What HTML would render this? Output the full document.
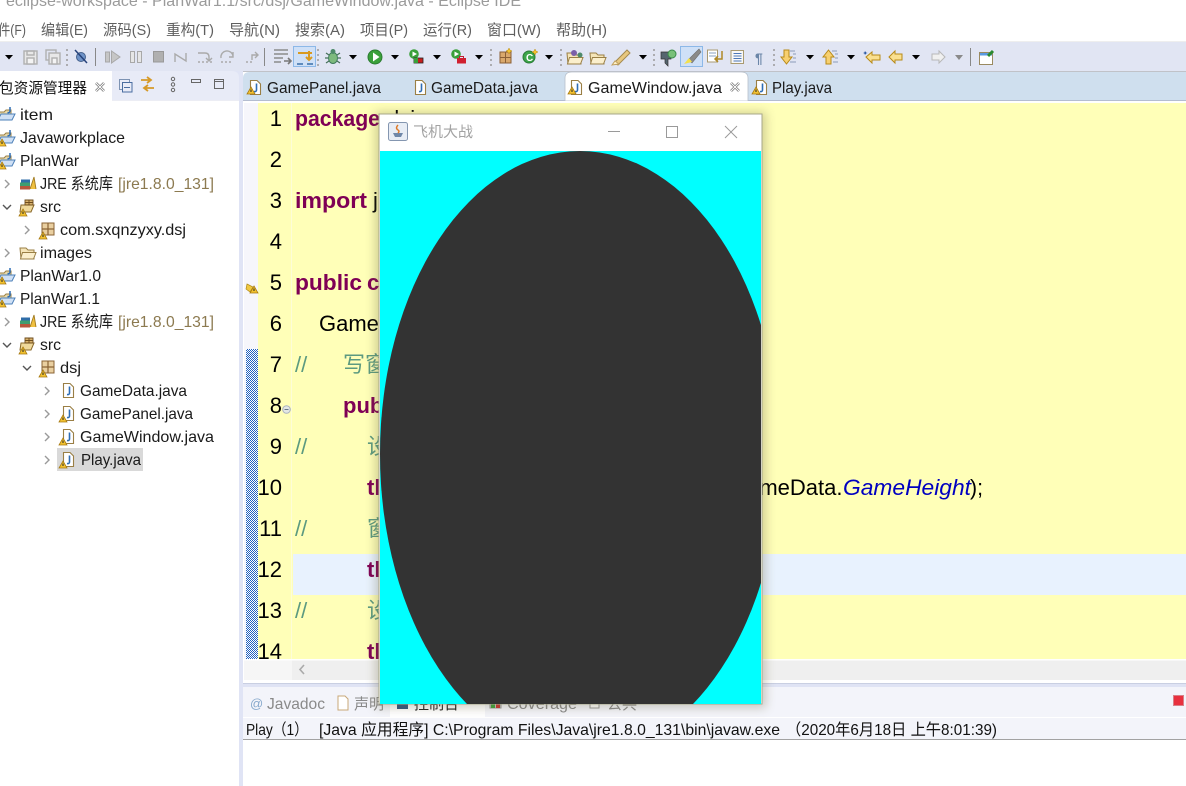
<!DOCTYPE html>
<html lang="zh"><head><meta charset="utf-8"><title>Eclipse</title>
<style>
html,body{margin:0;padding:0;background:#fff;width:1186px;height:786px;overflow:hidden}
svg{display:block;position:absolute;left:0;top:0}
text{font-family:"Liberation Sans","Noto Sans CJK SC",sans-serif;white-space:pre}
.m{font-size:15px;fill:#5f5f5f}
.t{font-size:16px;fill:#1a1a1a}
.b{font-size:16px;fill:#8c7a50}
.n{font-size:22px;fill:#000;text-anchor:end}
.k{font-size:22px;font-weight:bold;fill:#7f0055}
.c{font-size:22px;fill:#000}
.g{font-size:22px;fill:#5c9a80}
</style></head><body>
<svg width="1186" height="786" viewBox="0 0 1186 786" xmlns="http://www.w3.org/2000/svg">
<defs>
<pattern id="h" width="2" height="2" patternUnits="userSpaceOnUse"><rect width="2" height="2" fill="#fff"/><rect width="1" height="1" fill="#1f5fc0"/><rect x="1" y="1" width="1" height="1" fill="#1f5fc0"/></pattern>
<filter id="sh" x="-10%" y="-10%" width="120%" height="120%"><feGaussianBlur stdDeviation="5"/></filter>
<clipPath id="cl"><rect x="380" y="151" width="381" height="553"/></clipPath>
<g id="ar"><path d="M-4 -2H4L0 2.5Z" fill="#000"/></g>
<g id="dots"><path d="M0 -8v2M0 -3v2M0 2v2M0 7v2" stroke="#9a9a9a" stroke-width="1.5"/></g>
<g id="warn"><path d="M4 0L8 7H0Z" fill="#f2c230" stroke="#a87a10" stroke-width=".8"/><path d="M4 2.5v2.5" stroke="#222" stroke-width="1"/></g>
<g id="j"><path d="M1.5 .5H8L11.5 4V14.5H1.5Z" fill="#fff" stroke="#9a7f45" stroke-width="1.1"/><path d="M7.5 3.5V10Q7.5 12 5 11.5" fill="none" stroke="#2d6db5" stroke-width="1.6"/></g>
<g id="prj"><path d="M0 5H6L8 3H13V13H2Z" fill="#e9d9a8" stroke="#9a7f45"/><path d="M3 7H17L14 13H0Z" fill="#cfe0f5" stroke="#4d80b8"/><path d="M12 0V4Q12 6 9.500 5.500" fill="none" stroke="#2d6db5" stroke-width="1.500"/></g>
<g id="pkg"><rect x="0" y="0" width="12" height="12" fill="#e9cfa0" stroke="#8a6335"/><path d="M6 0V12M0 6H12" stroke="#8a6335" stroke-width="1.200"/></g>
<g id="src"><path d="M1 6H14L11 13H0Z" fill="#f0d99b" stroke="#8a6a2c"/><path d="M5 1H13V6H5ZM9 1V6M5 3.500H13" fill="#d9b26c" stroke="#6e4d1e" stroke-width=".9"/></g>
<g id="jre"><rect x="0" y="9" width="10" height="3.500" fill="#b7563c"/><rect x="0" y="5.500" width="10" height="3.500" fill="#3f9d70"/><rect x="1" y="2.500" width="9" height="3" fill="#2f6da8"/><path d="M10 12L14 0L16 12" fill="#f0c040" stroke="#a07a20" stroke-width=".9"/></g>
<g id="fold"><path d="M0 2H6L8 4H14V13H1Z" fill="#f5e5b8" stroke="#9a7f45"/><path d="M2.500 6.500H16L13.500 13H0.500Z" fill="#fbefcc" stroke="#9a7f45"/></g>
<path id="ch" d="M-2 -4L2 0L-2 4" fill="none" stroke="#9a9a9a" stroke-width="1.400"/>
<path id="cd" d="M-4 -2L0 2L4 -2" fill="none" stroke="#555" stroke-width="1.400"/>
<g id="tx"><path d="M-4 -4L4 4M4 -4L-4 4" stroke="#777" stroke-width="2.600"/><path d="M-4 -4L4 4M4 -4L-4 4" stroke="#fff" stroke-width="1"/></g>
</defs>

<rect width="1186" height="786" fill="#fff"/>
<!-- title / menu -->
<text x="6" y="6" font-size="16" fill="#9b9b9b" textLength="515" lengthAdjust="spacingAndGlyphs">eclipse-workspace - PlanWar1.1/src/dsj/GameWindow.java - Eclipse IDE</text>
<text class="m" x="-2" y="35" textLength="28" lengthAdjust="spacingAndGlyphs">件(F)</text>
<text class="m" x="41" y="35" textLength="47" lengthAdjust="spacingAndGlyphs">编辑(E)</text>
<text class="m" x="103" y="35" textLength="48" lengthAdjust="spacingAndGlyphs">源码(S)</text>
<text class="m" x="166" y="35" textLength="48" lengthAdjust="spacingAndGlyphs">重构(T)</text>
<text class="m" x="229" y="35" textLength="51" lengthAdjust="spacingAndGlyphs">导航(N)</text>
<text class="m" x="295" y="35" textLength="50" lengthAdjust="spacingAndGlyphs">搜索(A)</text>
<text class="m" x="360" y="35" textLength="48" lengthAdjust="spacingAndGlyphs">项目(P)</text>
<text class="m" x="423" y="35" textLength="49" lengthAdjust="spacingAndGlyphs">运行(R)</text>
<text class="m" x="487" y="35" textLength="54" lengthAdjust="spacingAndGlyphs">窗口(W)</text>
<text class="m" x="556" y="35" textLength="51" lengthAdjust="spacingAndGlyphs">帮助(H)</text>

<!-- toolbar -->
<rect x="0" y="41" width="1186" height="1" fill="#eeeeee"/>
<rect x="0" y="42" width="1186" height="29" fill="#e1e5f3"/>
<rect x="243" y="71" width="943" height="1" fill="#c0c2c8"/>
<rect x="0" y="71" width="243" height="715" fill="#e0e4f5"/>

<use href="#ar" x="9" y="57"/>
<g fill="none" stroke="#b0b0b0" stroke-width="1.400">
<rect x="24" y="51" width="13" height="13" fill="#e8e8e8"/><rect x="27" y="51" width="7" height="4"/><rect x="27" y="58" width="7" height="6" fill="#f4f4f4"/>
<rect x="46" y="50" width="10" height="10"/><rect x="49" y="53" width="11" height="11" fill="#e8e8e8"/><rect x="52" y="58" width="5" height="6" fill="#f4f4f4"/>
</g>
<use href="#dots" x="67" y="57"/>
<circle cx="81" cy="57" r="4.500" fill="#6f93c8" stroke="#45618c"/><path d="M75 50L87 63" stroke="#26427a" stroke-width="1.500"/>
<rect x="95" y="48" width="1" height="18" fill="#888"/>
<g fill="#c6c6c6" stroke="#a8a8a8">
<rect x="105.500" y="52" width="4" height="10"/><path d="M111.500 51L120 57L111.500 63Z"/>
<rect x="130.500" y="51.500" width="4" height="11" fill="#e6e6e6"/><rect x="137.500" y="51.500" width="4" height="11" fill="#e6e6e6"/>
<rect x="153.500" y="51.500" width="10" height="10.500" fill="#b0b0b0" stroke="#999"/>
</g>
<g fill="none" stroke="#aaa" stroke-width="1.400">
<path d="M175 62V54L186 61V53"/><path d="M198 53H205Q209 53 209 57V61M206 58L209 61L212 58"/><path d="M198 62h14" stroke-dasharray="2 2"/>
<path d="M221 58A6 6 0 0 1 233 56M233 52V57H229"/><path d="M221 62h12" stroke-dasharray="2 2"/>
<path d="M246 62h6" stroke-dasharray="2 2"/><path d="M252 60V55H258M255 52L258 55L255 58"/>
</g>
<rect x="264" y="48" width="1" height="18" fill="#888"/>
<g fill="none" stroke="#8b8b8b" stroke-width="1.600"><path d="M274 50H288M274 54H288M274 58H283M274 62H281"/><path d="M284 61H290M288 58L291 61L288 64" stroke="#777"/></g>
<rect x="293.500" y="46.500" width="22" height="20" fill="#cfe0f7" stroke="#8cb8e8"/>
<path d="M298 53H312M309 51V60M306 57L309 60L312 57" fill="none" stroke="#d99a20" stroke-width="2"/>
<path d="M297 64H303M307 64H313" stroke="#3a6fa8" stroke-width="1.500"/>
<use href="#dots" x="318" y="57"/>
<!-- bug -->
<ellipse cx="333" cy="58" rx="4.500" ry="5.500" fill="#7dba7d" stroke="#3f7a5a"/><circle cx="333" cy="51.500" r="2.500" fill="#4e8a6a"/><path d="M326 53L329 55M340 53L337 55M325 58H328M338 58H341M326 63L329 61M340 63L337 61" stroke="#46705a" stroke-width="1.200"/>
<use href="#ar" x="353" y="57"/>
<circle cx="375" cy="57" r="7" fill="#3aa03a" stroke="#2a7a30"/><path d="M373 52.500L379.500 57L373 61.500Z" fill="#fff"/>
<use href="#ar" x="395" y="57"/>
<circle cx="414" cy="54" r="4.800" fill="#3aa03a"/><path d="M412.500 51.500L417 54L412.500 56.500Z" fill="#fff"/><rect x="414" y="58" width="9" height="5" fill="#c81e1e" stroke="#222" stroke-width=".8"/><rect x="414" y="58" width="4" height="5" fill="#3aa03a"/>
<use href="#ar" x="437" y="57"/>
<circle cx="456" cy="54" r="4.800" fill="#3aa03a"/><path d="M454.500 51.500L459 54L454.500 56.500Z" fill="#fff"/><rect x="457" y="58" width="9" height="5.500" fill="#d01f2f"/><path d="M459.500 58V56.500H463.500V58" fill="none" stroke="#c01f2f"/>
<use href="#ar" x="479" y="57"/>
<use href="#dots" x="491" y="57"/>
<rect x="500" y="52" width="11" height="11" fill="#d9a86c" stroke="#8a5f35"/><path d="M505.500 52V63M500 57.500H511" stroke="#8a5f35"/><path d="M509 48l1 2 2 1-2 1-1 2-1-2-2-1 2-1z" fill="#f4c430" stroke="#b88a10" stroke-width=".5"/>
<circle cx="529" cy="57" r="6" fill="#3da54a" stroke="#2a7a35"/><text x="526" y="61" font-size="10" font-weight="bold" fill="#fff">C</text><path d="M535 49l1 2 2 1-2 1-1 2-1-2-2-1 2-1z" fill="#f4c430" stroke="#b88a10" stroke-width=".5"/>
<use href="#ar" x="549" y="57"/>
<use href="#dots" x="561" y="57"/>
<use href="#fold" x="567" y="51"/><circle cx="574" cy="53" r="3" fill="#7a5fa8"/><circle cx="580" cy="55" r="2.500" fill="#4e8a6a"/>
<use href="#fold" x="590" y="51"/>
<path d="M614 63L627 50L630 53L618 65Z" fill="#e8c880" stroke="#a58a50"/><path d="M612 65L615 61L619 64Z" fill="#fff2c8" stroke="#c0a060"/>
<use href="#ar" x="643" y="57"/>
<use href="#dots" x="654" y="57"/>
<path d="M661 52H671V59H668V66L665 63V59H661Z" fill="#55656f" stroke="#333" stroke-width=".7"/><circle cx="672" cy="54" r="4" fill="#78c078" stroke="#3a8a4a"/>
<rect x="680.500" y="46.500" width="22" height="20" fill="#cfe0f7" stroke="#8cb8e8"/>
<path d="M688 60L699 49L701 52L692 63Z" fill="#8a8a8a" stroke="#6f6f6f" stroke-width=".6"/><path d="M684 64L689 58L692 62Z" fill="#f3e04e"/>
<rect x="707.500" y="50" width="10" height="12" fill="#fff" stroke="#a99a70"/><path d="M709 53H716M709 56H716" stroke="#88a0c0"/><path d="M722 51V59H715M718 56L715 59L718 62" fill="none" stroke="#b08a28" stroke-width="1.500"/>
<rect x="731" y="50.500" width="12.500" height="13" fill="#f8f8f8" stroke="#a99a70"/><path d="M733.500 53.500h8M733.500 56h8M733.500 58.500h8M733.500 61h8" stroke="#4d78b8"/>
<text x="755" y="63" font-size="14" font-weight="bold" fill="#6b86a8">¶</text>
<use href="#dots" x="774" y="57"/>
<path d="M784 50H789V57H792L786.500 64L781 57H784Z" fill="#f7d070" stroke="#b88a18"/><path d="M790 51h5M793 54h3M793 58h3M790 62h6" stroke="#8a9cb8"/>
<use href="#ar" x="810" y="57"/>
<path d="M826 64H831V57H834L828.500 50L823 57H826Z" fill="#f7d070" stroke="#b88a18"/><path d="M832 51h5M835 54h3M835 58h3M833 62h5" stroke="#8a9cb8"/>
<use href="#ar" x="851" y="57"/>
<path d="M866 57L872 52V55H880V60H872V63Z" fill="#fae090" stroke="#b88a18"/><path d="M865 51l1 1.500 1.500 .5-1.500 .5-1 1.500-.5-1.500-1.500-.5 1.500-.5z" fill="#1f4f9f"/>
<path d="M889 57L895 51V54H902V60H895V63Z" fill="#fae090" stroke="#b88a18"/>
<use href="#ar" x="916" y="57"/>
<path d="M945 57L939 51V54H932V60H939V63Z" fill="#f0f0f0" stroke="#b8b8b8"/>
<path d="M955 55H963L959 60Z" fill="#8a8a8a"/>
<rect x="970" y="48" width="1" height="18" fill="#888"/>
<rect x="979.500" y="52.500" width="13" height="12" fill="#fff" stroke="#9a8a60"/><rect x="980" y="53" width="12" height="2.500" fill="#5a9ae0"/><path d="M988 56L993 51" stroke="#2a8a30" stroke-width="3"/>

<!-- left view header -->
<path d="M0 71H232Q239 71 239 78V100H0Z" fill="#e8ebf7"/>
<rect x="0" y="71" width="112" height="30" fill="#fff"/>
<rect x="112" y="100" width="127" height="1" fill="#ecedf4"/>
<rect x="0" y="101" width="239" height="685" fill="#fff"/>
<text x="-1" y="93" font-size="15" fill="#111" textLength="88" lengthAdjust="spacingAndGlyphs">包资源管理器</text>
<use href="#tx" x="100" y="87"/>
<rect x="119.500" y="79.500" width="10" height="10" fill="none" stroke="#7d93b3"/><rect x="122.500" y="82.500" width="9.500" height="9.500" fill="#e8ebf7" stroke="#4a6da0"/><path d="M124 87.500h6" stroke="#4a6da0"/>
<path d="M141 80H150M147 77L151 80L147 83" fill="none" stroke="#d69a28" stroke-width="1.800"/><path d="M154 88H145M148 85L144 88L148 91" fill="none" stroke="#d69a28" stroke-width="1.800"/>
<circle cx="173" cy="79" r="1.700" fill="none" stroke="#666"/><circle cx="173" cy="84.500" r="1.700" fill="none" stroke="#666"/><circle cx="173" cy="90" r="1.700" fill="none" stroke="#666"/>
<rect x="191.500" y="79.500" width="9" height="3" fill="none" stroke="#666"/>
<rect x="214.500" y="79.500" width="9" height="9" fill="none" stroke="#666"/><path d="M214 81.500h10" stroke="#666"/>

<!-- tree -->
<use href="#prj" x="-2" y="107"/>
<use href="#prj" x="-2" y="130"/><use href="#warn" x="-2" y="139"/>
<use href="#prj" x="-2" y="153"/><use href="#warn" x="-2" y="162"/>
<use href="#ch" x="7" y="184"/><use href="#jre" x="20" y="177"/>
<use href="#cd" x="7" y="207"/><use href="#src" x="20" y="199"/><use href="#warn" x="19" y="209"/>
<use href="#ch" x="27" y="230"/><use href="#pkg" x="42" y="223"/><use href="#warn" x="39" y="232"/>
<use href="#ch" x="7" y="253"/><use href="#fold" x="20" y="246"/>
<use href="#prj" x="-2" y="268"/><use href="#warn" x="-2" y="277"/>
<use href="#prj" x="-2" y="291"/><use href="#warn" x="-2" y="300"/>
<use href="#ch" x="7" y="322"/><use href="#jre" x="20" y="315"/>
<use href="#cd" x="7" y="345"/><use href="#src" x="20" y="337"/><use href="#warn" x="19" y="347"/>
<use href="#cd" x="27" y="368"/><use href="#pkg" x="42" y="361"/><use href="#warn" x="39" y="370"/>
<use href="#ch" x="47" y="391"/><use href="#j" x="62" y="383"/>
<rect x="57" y="448" width="86" height="23" fill="#d9d9d9"/>
<use href="#ch" x="47" y="414"/><use href="#j" x="62" y="406"/><use href="#warn" x="59" y="415"/>
<use href="#ch" x="47" y="437"/><use href="#j" x="62" y="429"/><use href="#warn" x="59" y="438"/>
<use href="#ch" x="47" y="460"/><use href="#j" x="62" y="452"/><use href="#warn" x="59" y="461"/>
<text class="t" x="20" y="120" textLength="33" lengthAdjust="spacingAndGlyphs">item</text>
<text class="t" x="20" y="143" textLength="105" lengthAdjust="spacingAndGlyphs">Javaworkplace</text>
<text class="t" x="20" y="166" textLength="59" lengthAdjust="spacingAndGlyphs">PlanWar</text>
<text class="t" x="40" y="189" textLength="73" lengthAdjust="spacingAndGlyphs">JRE 系统库</text>
<text class="b" x="118" y="189" textLength="96" lengthAdjust="spacingAndGlyphs">[jre1.8.0_131]</text>
<text class="t" x="40" y="212" textLength="21" lengthAdjust="spacingAndGlyphs">src</text>
<text class="t" x="60" y="235" textLength="126" lengthAdjust="spacingAndGlyphs">com.sxqnzyxy.dsj</text>
<text class="t" x="40" y="258" textLength="52" lengthAdjust="spacingAndGlyphs">images</text>
<text class="t" x="20" y="281" textLength="81" lengthAdjust="spacingAndGlyphs">PlanWar1.0</text>
<text class="t" x="20" y="304" textLength="80" lengthAdjust="spacingAndGlyphs">PlanWar1.1</text>
<text class="t" x="40" y="327" textLength="73" lengthAdjust="spacingAndGlyphs">JRE 系统库</text>
<text class="b" x="118" y="327" textLength="96" lengthAdjust="spacingAndGlyphs">[jre1.8.0_131]</text>
<text class="t" x="40" y="350" textLength="21" lengthAdjust="spacingAndGlyphs">src</text>
<text class="t" x="60" y="373" textLength="21" lengthAdjust="spacingAndGlyphs">dsj</text>
<text class="t" x="80" y="396" textLength="107" lengthAdjust="spacingAndGlyphs">GameData.java</text>
<text class="t" x="80" y="419" textLength="113" lengthAdjust="spacingAndGlyphs">GamePanel.java</text>
<text class="t" x="80" y="442" textLength="134" lengthAdjust="spacingAndGlyphs">GameWindow.java</text>
<text class="t" x="81" y="465" textLength="60" lengthAdjust="spacingAndGlyphs">Play.java</text>

<!-- editor tabs -->
<path d="M243 100V78Q243 72 250 72H1186V100Z" fill="#cfdfee"/>
<rect x="243" y="100" width="943" height="1" fill="#b4bdd0"/>
<path d="M565 101V78Q565 72 572 72H741Q748 72 748 78V101Z" fill="#fff" stroke="#b8c0cc" stroke-width=".8"/>
<use href="#j" x="249" y="80"/><use href="#warn" x="247" y="87"/>
<use href="#j" x="414" y="80"/>
<use href="#j" x="570" y="80"/><use href="#warn" x="568" y="87"/>
<use href="#j" x="755" y="80"/><use href="#warn" x="752" y="87"/>
<text class="t" x="267" y="93" textLength="114" lengthAdjust="spacingAndGlyphs">GamePanel.java</text>
<text class="t" x="431" y="93" textLength="107" lengthAdjust="spacingAndGlyphs">GameData.java</text>
<text class="t" x="588" y="93" textLength="134" lengthAdjust="spacingAndGlyphs">GameWindow.java</text>
<text class="t" x="772" y="93" textLength="60" lengthAdjust="spacingAndGlyphs">Play.java</text>
<use href="#tx" x="735" y="87"/>

<!-- editor -->
<rect x="243" y="101" width="943" height="582" fill="#fff"/>
<rect x="244" y="103" width="14" height="556" fill="#f6f6fb"/>
<rect x="246" y="349" width="12" height="310" fill="url(#h)"/>
<rect x="258" y="103" width="928" height="556" fill="#ffffb8"/>
<rect x="291" y="103" width="1" height="556" fill="#fdfdd8"/>
<rect x="293" y="554" width="893" height="41" fill="#e8f2fe"/>
<rect x="244" y="660" width="942" height="20" fill="#efefef"/>
<rect x="244" y="660" width="48" height="20" fill="#f6f6f6"/>
<path d="M304 665L300 669.500L304 674" fill="none" stroke="#aaa" stroke-width="1.600"/>
<rect x="243" y="683" width="943" height="1" fill="#c9cfe2"/>
<rect x="243" y="684" width="943" height="3" fill="#dfe3f4"/>
<text class="n" x="282" y="126">1</text><text class="n" x="282" y="167">2</text>
<text class="n" x="282" y="208">3</text><text class="n" x="282" y="249">4</text>
<text class="n" x="282" y="290">5</text><text class="n" x="282" y="331">6</text>
<text class="n" x="282" y="372">7</text><text class="n" x="282" y="413">8</text>
<text class="n" x="282" y="454">9</text><text class="n" x="282" y="495">10</text>
<text class="n" x="282" y="536">11</text><text class="n" x="282" y="577">12</text>
<text class="n" x="282" y="618">13</text><text class="n" x="282" y="659">14</text>
<circle cx="286.500" cy="409.500" r="3.800" fill="#e4e8e4" stroke="#a8b0c0"/><path d="M284.500 409.500h4" stroke="#678"/>
<path d="M247 284l6 3-3 5-4-3z" fill="#f0c840" stroke="#b08a18" stroke-width=".7"/><use href="#warn" x="250" y="286"/>
<text class="k" x="295" y="126" textLength="85" lengthAdjust="spacingAndGlyphs">package</text>
<text class="c" x="387" y="126">dsj;</text>
<text class="k" x="295" y="208" textLength="72" lengthAdjust="spacingAndGlyphs">import</text><text class="c" x="373" y="208">java</text>
<text class="k" x="295" y="290" textLength="67" lengthAdjust="spacingAndGlyphs">public</text><text class="k" x="367" y="290">class</text>
<text class="c" x="319" y="331">Game</text>
<text class="g" x="295" y="372">//</text><text class="g" x="343" y="372">写窗</text>
<text class="k" x="343" y="413">pub</text>
<text class="g" x="295" y="454">//</text><text class="g" x="367" y="454">设</text>
<text class="k" x="367" y="495">th</text>
<text class="c" x="730" y="495">GameData.</text>
<text x="843" y="495" font-size="22" font-style="italic" fill="#0000c0" textLength="128" lengthAdjust="spacingAndGlyphs">GameHeight</text>
<text class="c" x="970" y="495" textLength="13" lengthAdjust="spacingAndGlyphs">);</text>
<text class="g" x="295" y="536">//</text><text class="g" x="367" y="536">窗</text>
<text class="k" x="367" y="577">th</text>
<text class="g" x="295" y="618">//</text><text class="g" x="367" y="618">设</text>
<text class="k" x="367" y="659">th</text>
<rect x="244" y="659.500" width="942" height="1" fill="#fff"/>

<!-- bottom panel -->
<rect x="243" y="687" width="943" height="99" fill="#fff"/>
<rect x="243" y="687" width="943" height="30" fill="#f3f4fa"/>
<rect x="243" y="718" width="943" height="21" fill="#f3f4fa"/>
<rect x="243" y="739" width="943" height="1" fill="#a2a2a2"/>
<text x="250" y="708" font-size="13" fill="#86a8cc">@</text>
<text x="267" y="709" font-size="16" fill="#8a8a8a" textLength="58" lengthAdjust="spacingAndGlyphs">Javadoc</text>
<path d="M338 696H345L348 699V710H338Z" fill="#fff" stroke="#c8a878"/>
<text x="354" y="709" font-size="15" fill="#8a8a8a">声明</text>
<rect x="390" y="700" width="95" height="17" fill="#fff"/>
<text x="414" y="709" font-size="15" fill="#222">控制台</text>
<rect x="397" y="700" width="11" height="9" fill="#33557f"/>
<rect x="490" y="698" width="11" height="10" fill="#c9c9c9" stroke="#999"/><rect x="491" y="703" width="4" height="5" fill="#3aa03a"/><rect x="496" y="703" width="4" height="5" fill="#c83030"/>
<text x="507" y="709" font-size="16" fill="#8a8a8a" textLength="70" lengthAdjust="spacingAndGlyphs">Coverage</text>
<rect x="590" y="697" width="9" height="11" fill="#fff" stroke="#999"/>
<text x="607" y="709" font-size="15" fill="#8a8a8a">公共</text>
<rect x="1173.500" y="695.500" width="10" height="10" fill="#e8303e" stroke="#d88088"/>
<text x="246" y="735" font-size="16" fill="#111" textLength="62" lengthAdjust="spacingAndGlyphs">Play（1）</text>
<text x="319" y="735" font-size="16" fill="#111" textLength="461" lengthAdjust="spacingAndGlyphs">[Java 应用程序] C:\Program Files\Java\jre1.8.0_131\bin\javaw.exe</text>
<text x="786" y="735" font-size="16" fill="#111" textLength="211" lengthAdjust="spacingAndGlyphs">（2020年6月18日 上午8:01:39)</text>

<!-- java window -->
<rect x="375" y="112" width="391" height="596" fill="#6a6440" opacity=".3" filter="url(#sh)"/>
<rect x="379" y="114" width="383" height="590" fill="#fff" stroke="#a8a88a" stroke-width="1"/>
<rect x="380" y="151" width="381" height="553" fill="#00ffff"/>
<ellipse cx="580" cy="454" rx="200" ry="303" fill="#333" clip-path="url(#cl)"/>
<rect x="388.500" y="122.500" width="19" height="18" rx="2" fill="#e8edf5" stroke="#8496b0"/>
<path d="M393 133H403L401 137H395Z" fill="#6f87a8"/><path d="M398 125Q395 128 398 130Q400 131 398 133" fill="none" stroke="#dd7a28" stroke-width="1.500"/>
<text x="413" y="137" font-size="14.500" fill="#a3a3a3" textLength="60" lengthAdjust="spacingAndGlyphs">飞机大战</text>
<rect x="608" y="131" width="12" height="1" fill="#9a9a9a"/>
<rect x="666.500" y="126.500" width="11" height="11" fill="none" stroke="#9a9a9a"/>
<path d="M725 126L737 138M737 126L725 138" stroke="#9a9a9a" stroke-width="1"/>
</svg>
</body></html>
